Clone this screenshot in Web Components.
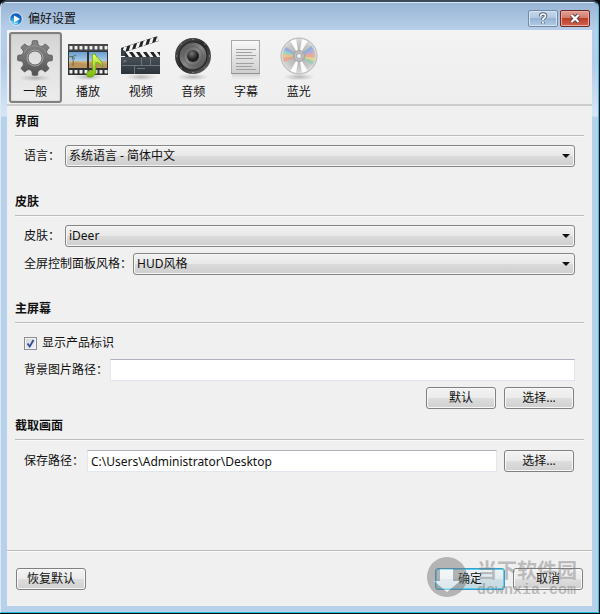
<!DOCTYPE html>
<html lang="zh-CN">
<head>
<meta charset="utf-8">
<title>偏好设置</title>
<style>
html,body{margin:0;background:#0a0d10}
body{padding:0 1px 1px 0;font:12px/20px "Noto Sans","Noto Sans CJK SC",sans-serif;color:#111}
</style>
</head>
<body>
<pref-window heading="偏好设置">
  <pref-toolbar slot="toolbar">
    <pref-tab icon="gear" selected>一般</pref-tab>
    <pref-tab icon="film">播放</pref-tab>
    <pref-tab icon="clapper">视频</pref-tab>
    <pref-tab icon="speaker">音频</pref-tab>
    <pref-tab icon="document">字幕</pref-tab>
    <pref-tab icon="disc">蓝光</pref-tab>
  </pref-toolbar>
  <pref-section heading="界面" class="language">
    <pref-select label="语言：" value="系统语言 - 简体中文" style="--label:41px"></pref-select>
  </pref-section>
  <pref-section heading="皮肤" class="skin">
    <pref-select label="皮肤：" value="iDeer" style="--label:41px"></pref-select>
    <pref-select label="全屏控制面板风格：" value="HUD风格" style="--label:109px"></pref-select>
  </pref-section>
  <pref-section heading="主屏幕" class="screen">
    <pref-check label="显示产品标识"></pref-check>
    <pref-path label="背景图片路径：" value="" style="--label:86px"></pref-path>
    <pref-actions><pref-button>默认</pref-button><pref-button>选择...</pref-button></pref-actions>
  </pref-section>
  <pref-section heading="截取画面" class="capture">
    <pref-path label="保存路径：" value="C:\Users\Administrator\Desktop" style="--label:63px"><pref-button>选择...</pref-button></pref-path>
  </pref-section>
  <pref-button slot="reset">恢复默认</pref-button>
  <pref-button slot="confirm" primary>确定</pref-button>
  <pref-button slot="confirm">取消</pref-button>
  <site-mark slot="mark"></site-mark>
</pref-window>

<script>
function gearPath(cx, cy, teeth, outer, inner) {
  const pts = [];
  const step = Math.PI * 2 / teeth;
  for (let i = 0; i < teeth; i++) {
    const a = i * step - Math.PI / 2;
    for (const [d, r] of [[-.3, inner], [-.2, inner + 1.5], [-.17, outer - .6], [-.12, outer], [.12, outer], [.17, outer - .6], [.2, inner + 1.5], [.3, inner]]) {
      pts.push((cx + r * Math.cos(a + d)).toFixed(2) + ' ' + (cy + r * Math.sin(a + d)).toFixed(2));
    }
  }
  return 'M' + pts.join('L') + 'Z';
}
function wedge(cx, cy, r, from, to, fill, opacity) {
  const p = d => { const a = d * Math.PI / 180; return (cx + r * Math.cos(a)).toFixed(2) + ' ' + (cy + r * Math.sin(a)).toFixed(2); };
  return `<path d="M${cx} ${cy}L${p(from)}A${r} ${r} 0 0 1 ${p(to)}Z" fill="${fill}" opacity="${opacity}"/>`;
}
const holes = y => Array.from({length: 8}, (_, i) => `<rect x="${5.5 + i * 5}" y="${y}" width="3" height="3.4" rx=".6" fill="#eee"/>`).join('');
const stripes = Array.from({length: 7}, (_, i) => `<path d="M${3 + i * 7} 0h3.5l-3.5 5h-3.5z" fill="#f4f4f4"/>`).join('');
const shadow = '<ellipse cx="24" cy="41" rx="16" ry="3.5" fill="url(#sh)"/>';
const shadowDef = '<radialGradient id="sh"><stop stop-color="#777" stop-opacity=".5"/><stop offset="1" stop-color="#999" stop-opacity="0"/></radialGradient>';

const ICONS = {
  gear: `<defs>${shadowDef}<linearGradient id="g" x2="0" y2="1"><stop stop-color="#858585"/><stop offset=".5" stop-color="#727272"/><stop offset="1" stop-color="#505050"/></linearGradient></defs>${shadow}
    <path fill-rule="evenodd" d="${gearPath(24, 21, 8, 17.5, 13)}M31 21a7 7 0 1 0-14 0a7 7 0 1 0 14 0Z" fill="url(#g)" stroke="#555" stroke-width=".8"/>
    <circle cx="24" cy="21" r="8" fill="none" stroke="#a2a2a2" stroke-width="1"/><path d="M13 16a12 12 0 0 1 22 0" fill="none" stroke="#999" stroke-width=".8"/>`,
  film: `<defs>${shadowDef}<linearGradient id="s" x2="0" y2="1"><stop stop-color="#6b9fd0"/><stop offset=".55" stop-color="#a7cbe7"/><stop offset=".6" stop-color="#d3b176"/><stop offset="1" stop-color="#a97c43"/></linearGradient><linearGradient id="n" x2="0" y2="1"><stop stop-color="#e5ff68"/><stop offset="1" stop-color="#78b70b"/></linearGradient></defs>${shadow}
    <rect x="4" y="8" width="40" height="31" fill="#303234"/><rect x="4" y="8" width="40" height="7" fill="#464849"/>${holes(10)}${holes(34)}
    <rect x="5" y="16" width="18" height="16" fill="url(#s)"/><rect x="25" y="16" width="18" height="16" fill="url(#s)"/>
    <path d="M5 28l7-2 11 3v3H5zM25 27l18 2v3H25z" fill="#bb935b"/><path d="M9 30q1-6-1-10m0 1l-4-1m4 1l4-2m-4 2l3 2" fill="none" stroke="#5a6b5c"/>
    <path d="M28.300 18.500l3-.5c1 5 8 6 7.500 13-1.500-3-4-4.500-7-4.500v9.500c0 3-3 5-6 5s-4-2-3-4c1-2 3-3 5.500-2z" fill="url(#n)" stroke="#659f10" stroke-width=".8"/>`,
  clapper: `<defs>${shadowDef}<linearGradient id="b" x2="0" y2="1"><stop stop-color="#495056"/><stop offset="1" stop-color="#2c343b"/></linearGradient><clipPath id="c"><rect width="38" height="5"/></clipPath></defs>${shadow}
    <g transform="translate(4 12) rotate(-18)"><rect width="38" height="5" fill="#202224"/><g clip-path="url(#c)">${stripes}</g></g>
    <g transform="translate(5 16)"><rect width="38" height="5" fill="#202224"/><g clip-path="url(#c)"><g transform="translate(38 0) scale(-1 1)">${stripes}</g></g></g>
    <path d="M4 13l4 2v5H4z" fill="#383e42"/><rect x="4" y="21" width="39" height="17" fill="url(#b)"/>
    <path d="M5 29.500h38M17.500 29.500V38M24.500 22v7.500M33.500 22v7.500M7 27v-3l2 2v-2M20 32.500h8" fill="none" stroke="#78828a" stroke-width=".8"/>`,
  speaker: `<defs>${shadowDef}<linearGradient id="r" x2="1" y2="1"><stop stop-color="#555"/><stop offset=".5" stop-color="#292929"/><stop offset="1" stop-color="#666"/></linearGradient><linearGradient id="k" x2="1" y2="1"><stop stop-color="#434343"/><stop offset=".5" stop-color="#888"/><stop offset="1" stop-color="#444"/></linearGradient><radialGradient id="d" cx=".4" cy=".3"><stop stop-color="#777"/><stop offset="1" stop-color="#1e1e1e"/></radialGradient></defs>${shadow}
    <circle cx="24" cy="20" r="18" fill="url(#r)"/><circle cx="24" cy="20" r="14.500" fill="#202020"/><circle cx="24" cy="20" r="13.500" fill="url(#k)"/><circle cx="24" cy="20" r="9.500" fill="none" stroke="#555" stroke-width=".6"/><circle cx="24" cy="20" r="6" fill="url(#d)"/>
    <g fill="#8a8a8a"><circle cx="24" cy="3.500" r=".8"/><circle cx="12" cy="8" r=".8"/><circle cx="36" cy="8" r=".8"/><circle cx="7.500" cy="20" r=".8"/><circle cx="40.500" cy="20" r=".8"/><circle cx="12" cy="32" r=".8"/><circle cx="36" cy="32" r=".8"/><circle cx="24" cy="36.500" r=".8"/></g>`,
  document: `<defs><linearGradient id="p" x2="0" y2="1"><stop stop-color="#f8f8f8"/><stop offset="1" stop-color="#cfcfcf"/></linearGradient><linearGradient id="f" x2="0" y2="1"><stop stop-color="#d5d5d5"/><stop offset="1" stop-color="#eee"/></linearGradient></defs>
    <rect x="10" y="38" width="28" height="5" fill="url(#f)"/><rect x="9.500" y="4.500" width="28" height="33" fill="url(#p)" stroke="#aaa"/><path d="M9 37.500h29" stroke="#929292"/>
    <path d="M14 13.500h20M14 16.500h16M14 19.500h20M14 22.500h17M14 27.500h18M14 30.500h16M14 33.500h20" stroke="#a0a0a0"/>`,
  disc: `<defs>${shadowDef}<radialGradient id="m"><stop stop-color="#aaa"/><stop offset=".7" stop-color="#c6c6c6"/><stop offset="1" stop-color="#dedede"/></radialGradient></defs>${shadow}
    <circle cx="24" cy="20" r="18" fill="url(#m)" stroke="#b7b7b7"/>
    ${wedge(24,20,17,240,260,'#fff',.95)}${wedge(24,20,17,280,300,'#fff',.9)}${wedge(24,20,17,60,80,'#fff',.9)}${wedge(24,20,17,100,120,'#fff',.95)}
    ${wedge(24,20,16,200,215,'#86a6df',.75)}${wedge(24,20,16,187,201,'#8ad4cb',.75)}${wedge(24,20,16,174,187,'#edc57a',.8)}${wedge(24,20,16,158,174,'#ef9b80',.75)}
    ${wedge(24,20,16,320,335,'#7fa8df',.75)}${wedge(24,20,16,335,350,'#b6a1dc',.75)}${wedge(24,20,16,350,366,'#f2a585',.75)}${wedge(24,20,16,6,20,'#e8d381',.8)}${wedge(24,20,16,20,34,'#88d0b3',.75)}
    <circle cx="24" cy="20" r="5.500" fill="#bdbdbd" stroke="#999" stroke-width=".8"/><circle cx="24" cy="20" r="2.500" fill="#f2f2f2" stroke="#aaa"/>`
};

class PrefElement extends HTMLElement {
  connectedCallback() {
    if (this.shadowRoot) return;
    this.attachShadow({mode: 'open'}).innerHTML = `<style>*{box-sizing:border-box}${this.styles()}</style>${this.markup()}`;
  }
  attr(name) { return this.getAttribute(name) || ''; }
}

customElements.define('pref-window', class extends PrefElement {
  styles() { return `
    :host{display:flex;flex-direction:column;box-sizing:border-box;min-height:calc(100vh - 1px);position:relative;
      border:solid;border-width:2px 1px 1px 1px;border-color:#3b4a5a #36c3e2 #2bbcdc #dceaf5;border-radius:7px 7px 0 0;padding:0 6px 6px 6px;
      background:linear-gradient(#dceaf6,#dceaf6) 0 0/100% 1px no-repeat,linear-gradient(#98b4d5,#b7cfe9 28px,#b3cde9 60px,#d5e6f6 114px,#b8d1eb 115px)}
    header{display:flex;align-items:center;height:28px;padding:0 2px 0 2px;gap:5px}
    h1{font:inherit;margin:0;flex:1;padding-top:5px}
    .logo{width:14px;height:14px;margin-top:5px}
    .controls{display:flex;gap:2px;padding-top:4px}
    .controls button{width:30px;height:17px;padding:0;border:1px solid #7489a4;border-radius:2px;background:linear-gradient(#c5d7eb,#b2c9e2 45%,#97b3d3 50%,#b1cbe6);box-shadow:inset 0 0 0 1px #d5e4f3;display:grid;place-items:center}
    .controls .close{border-color:#6e2825;background:linear-gradient(#e2a196,#d37b6c 45%,#bb3d2a 50%,#cf6650);box-shadow:inset 0 0 0 1px #e6aaa0}
    .controls svg{width:14px;height:13px;display:block}
    main{flex:1;display:flex;flex-direction:column;background:#f0f0f0}
    footer{margin-top:auto;border-top:1px solid #bdbdbd;box-shadow:inset 0 1px #fafafa;padding:17px 9px 16px 9px;display:flex;justify-content:space-between;position:relative}
    .confirm{display:flex;gap:8px}`; }
  markup() { return `
    <header>
      <svg class="logo" viewBox="0 0 14 14"><defs><radialGradient id="l" cx=".4" cy=".7"><stop stop-color="#45d4ff"/><stop offset="1" stop-color="#1262bd"/></radialGradient></defs><circle cx="7" cy="7" r="6.300" fill="url(#l)" stroke="#e8f3fc"/><path d="M5 3.500l6 3.500-6 3.500z" fill="#fff"/><path d="M2 9q3 4 7 2" stroke="#b9efff" fill="none"/></svg>
      <h1>${this.attr('heading')}</h1>
      <div class="controls">
        <button aria-label="帮助"><svg viewBox="0 0 14 13" fill="none"><path d="M4.500 4.500q0-2.500 2.500-2.500t2.500 2q0 1.500-2.500 3v1M7 10v1.500" stroke="#50627a" stroke-width="3.500"/><path d="M4.500 4.500q0-2.500 2.500-2.500t2.500 2q0 1.500-2.500 3v1M7 10v1.500" stroke="#fff" stroke-width="1.700"/></svg></button>
        <button class="close" aria-label="关闭"><svg viewBox="0 0 14 13" fill="none"><path d="M3.500 3l7 7m0-7l-7 7" stroke="#5d4345" stroke-width="4.200"/><path d="M3.500 3l7 7m0-7l-7 7" stroke="#fff" stroke-width="2.200"/></svg></button>
      </div>
    </header>
    <main><slot name="toolbar"></slot><slot></slot>
      <footer><slot name="reset"></slot><div class="confirm"><slot name="confirm"></slot></div><slot name="mark"></slot></footer>
    </main>`; }
});

customElements.define('pref-toolbar', class extends PrefElement {
  styles() { return `
    :host{display:block;padding:2px 2px 1px;border-bottom:2px solid #cdcdcd;background:linear-gradient(#f3f3f3,#eee)}
    nav{display:grid;grid-template-columns:repeat(6,1fr);max-width:316px}`; }
  markup() { return '<nav><slot></slot></nav>'; }
});

customElements.define('pref-tab', class extends PrefElement {
  styles() { return `
    :host{display:block}
    button{display:flex;flex-direction:column;align-items:center;width:100%;height:71px;padding:3px 0 0;border:1px solid transparent;border-radius:3px;background:none;font:inherit;color:inherit}
    :host([selected]) button{border:2px solid #808080;padding-top:3px;background:linear-gradient(#d4d4d4,#e3e3e3 50%,#ececec);box-shadow:inset 0 0 2px #bbb}
    svg{width:48px;height:46px;flex:none}
    span{line-height:20px}
    :host([selected]) span{line-height:18px}`; }
  markup() { return `<button aria-pressed="${this.hasAttribute('selected')}"><svg viewBox="0 0 48 46" aria-hidden="true">${ICONS[this.attr('icon')]}</svg><span><slot></slot></span></button>`; }
});

customElements.define('pref-section', class extends PrefElement {
  styles() { return `
    :host{display:block;padding:0 8px;margin-top:6px}
    :host(.skin){margin-top:24px}
    :host(.screen){margin-top:23px}
    :host(.capture){margin-top:7px}
    h2{font:inherit;font-weight:bold;margin:0;height:24px;border-bottom:1px solid #bcbcbc;box-shadow:0 1px #f8f8f8}
    .rows{display:flex;flex-direction:column;gap:4px;padding:8px 9px 0}
    :host(.screen) .rows{gap:6px}
    :host(.screen) .rows,:host(.capture) .rows{padding-top:10px}`; }
  markup() { return `<h2>${this.attr('heading')}</h2><div class="rows"><slot></slot></div>`; }
});

customElements.define('pref-select', class extends PrefElement {
  styles() { return `
    :host{display:flex;align-items:center;height:24px}
    label{width:var(--label);flex:none;white-space:nowrap}
    .box{flex:1;display:grid;align-items:center}
    .box>*{grid-area:1/1}
    select{appearance:none;width:100%;height:22px;padding:0 20px 0 3px;margin:0;border:1px solid #858585;border-radius:3px;font:inherit;color:inherit;background:linear-gradient(#f2f2f2,#e8e8e8 48%,#dadada 52%,#cecece);box-shadow:inset 0 0 0 1px #f6f6f6}
    svg{justify-self:end;width:8px;height:4px;margin-right:5px;pointer-events:none}`; }
  markup() { return `<label for="field">${this.attr('label')}</label><div class="box"><select id="field"><option>${this.attr('value')}</option></select><svg viewBox="0 0 8 4"><path d="M0 0h8L4 4z" fill="#111"/></svg></div>`; }
});

customElements.define('pref-path', class extends PrefElement {
  styles() { return `
    :host{display:flex;align-items:center}
    label{width:var(--label);flex:none;white-space:nowrap}
    input{flex:1;min-width:0;height:22px;margin:0;padding:0 3px;border:1px solid #e2e6ee;border-top-color:#aeb2bb;background:#fff;font:inherit;color:inherit}
    ::slotted(pref-button){margin:0 1px 0 7px}`; }
  markup() { return `<label for="field">${this.attr('label')}</label><input id="field" type="text" value="${this.attr('value')}"><slot></slot>`; }
});

customElements.define('pref-check', class extends PrefElement {
  styles() { return `
    :host{display:flex;height:20px}
    label{display:flex;align-items:center;gap:5px}
    .box{display:grid;place-items:center}
    .box>*{grid-area:1/1}
    input{appearance:none;width:13px;height:13px;margin:0;border:1px solid #8a8d91;background:linear-gradient(135deg,#cdd2da,#f5f6f8);box-shadow:inset 0 0 0 1px #f4f4f4}
    svg{width:9px;height:9px;pointer-events:none}
    input:not(:checked)+svg{visibility:hidden}`; }
  markup() { return `<label><span class="box"><input type="checkbox" checked><svg viewBox="0 0 9 9"><path d="M1.500 4.500l2.200 3L7.500 1" fill="none" stroke="#344a91" stroke-width="1.800"/></svg></span>${this.attr('label')}</label>`; }
});

customElements.define('pref-actions', class extends PrefElement {
  styles() { return ':host{display:flex;justify-content:flex-end;gap:8px;padding-right:1px}'; }
  markup() { return '<slot></slot>'; }
});

customElements.define('pref-button', class extends PrefElement {
  styles() { return `
    :host{display:block;flex:none}
    button{display:block;min-width:70px;height:22px;padding:0 8px;border:1px solid #808080;border-radius:3px;background:linear-gradient(#f3f3f3,#ebebeb 48%,#dddddd 52%,#d0d0d0);box-shadow:inset 0 0 0 1px #f8f8f8;font:inherit;color:inherit}
    :host([primary]) button{border-color:#3b9cc9;box-shadow:inset 0 0 0 1px #5cd0f3;background:linear-gradient(#eef3f5,#e3ebef 48%,#cedee5 52%,#c5d9e1)}`; }
  markup() { return '<button><slot></slot></button>'; }
});

customElements.define('site-mark', class extends PrefElement {
  styles() { return `
    :host{position:absolute;right:15px;top:6px;display:flex;align-items:flex-start;gap:10px;pointer-events:none;color:rgba(120,120,120,.46)}
    svg{width:40px;height:40px}
    .name{font:bold 20px/26px "Noto Sans CJK SC",sans-serif}
    .url{font:bold 15px/16px "Liberation Mono",monospace}`; }
  markup() { return `<svg viewBox="0 0 40 40"><path fill-rule="evenodd" d="M20 0a20 20 0 1 0 .01 0zM13 12h13v12h7L20 35 7 24h6z" fill="#777" opacity=".5"/><path d="M13 12h13v12h7L20 35 7 24h6z" fill="#fff" opacity=".4"/></svg><div><div class="name">当下软件园</div><div class="url">downxia.com</div></div>`; }
});
</script>
</body>
</html>
